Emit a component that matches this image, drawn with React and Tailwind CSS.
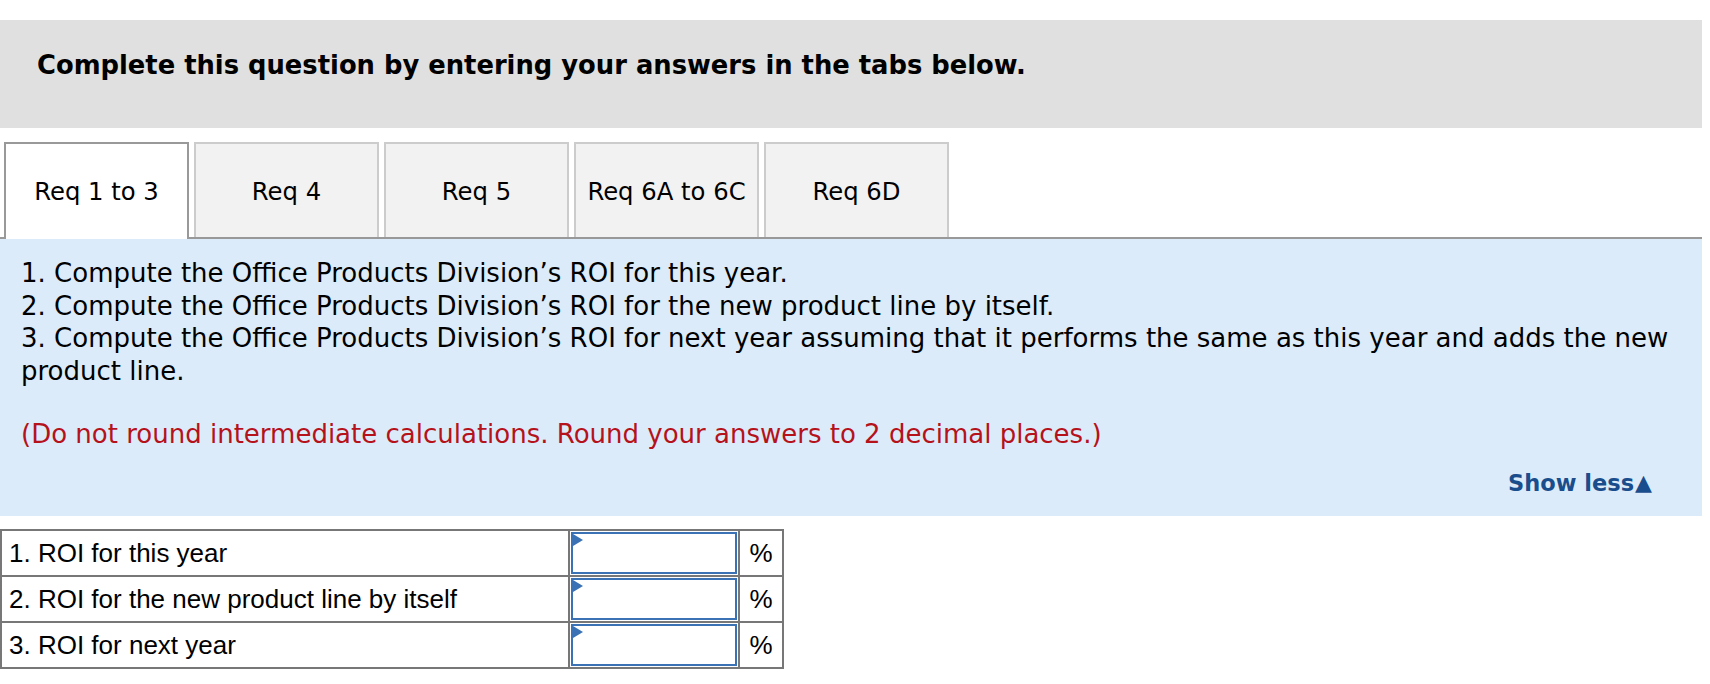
import React from "react";

const tabs = ["Req 1 to 3", "Req 4", "Req 5", "Req 6A to 6C", "Req 6D"];
const rows = [
  "1. ROI for this year",
  "2. ROI for the new product line by itself",
  "3. ROI for next year",
];

export default function App() {
  return (
    <div className="w-[1710px] h-[684px] bg-white pt-[20px] text-black" style={{ fontFamily: '"DejaVu Sans", Verdana, sans-serif' }}>
      <div className="w-[1702px]">
        <div className="h-[108px] bg-[#e0e0e0] pt-[30px] pl-[37px]">
          <h1 className="text-[25.8px] font-bold leading-[30px] whitespace-nowrap">Complete this question by entering your answers in the tabs below.</h1>
        </div>
        <div className="flex items-end gap-[5px] pl-[4px] mt-[14px]">
          {tabs.map((t, i) =>
            i === 0 ? (
              <div key={t} className="relative z-10 w-[185px] h-[97px] -mb-[2px] bg-white border-2 border-b-0 border-[#999999] flex items-center justify-center text-[24.3px]">
                <span className="pt-[1px]">{t}</span>
              </div>
            ) : (
              <div key={t} className="w-[185px] h-[95px] bg-[#f2f2f2] border-2 border-b-0 border-[#cccccc] flex items-center justify-center text-[24.3px]">
                <span className="pt-[3px]">{t}</span>
              </div>
            )
          )}
        </div>
        <div className="border-t-2 border-[#999999] bg-[#dcebf9] h-[279px] pt-[18px] pl-[21px] pr-[20px]">
          <div className="text-[26px] leading-[32.7px] whitespace-nowrap">
            <div>1. Compute the Office Products Division’s ROI for this year.</div>
            <div>2. Compute the Office Products Division’s ROI for the new product line by itself.</div>
            <div>3. Compute the Office Products Division’s ROI for next year assuming that it performs the same as this year and adds the new</div>
            <div>product line.</div>
            <div className="mt-[30px] text-[#b5121b]">(Do not round intermediate calculations. Round your answers to 2 decimal places.)</div>
          </div>
          <div className="flex justify-end pr-[30px] mt-[21px]">
            <span className="text-[#1a4d8c] font-bold text-[22.5px] leading-none flex items-center">
              Show less<span className="text-[22px] ml-[1px]">▲</span>
            </span>
          </div>
        </div>
        <div className="mt-[13px]">
          <table className="border-collapse border-2 border-[#777777]" style={{ fontFamily: '"Liberation Sans", Arial, sans-serif' }}>
            <tbody>
              {rows.map((r) => (
                <tr key={r} className="h-[46px]">
                  <td className="w-[568px] border-2 border-[#777777] pl-[7px] text-[26px] leading-none align-middle whitespace-nowrap">{r}</td>
                  <td className="w-[170px] border-2 border-[#777777] p-0 align-middle">
                    <div className="relative h-[42px] mx-[1px] border-2 border-[#3a72b5] bg-white">
                      <svg className="absolute left-0 top-0" width="10" height="12" viewBox="0 0 10 12">
                        <polygon points="0,0 10,6 0,12" fill="#3a72b5" />
                      </svg>
                    </div>
                  </td>
                  <td className="w-[44px] border-2 border-[#777777] text-center text-[26px] leading-none align-middle">%</td>
                </tr>
              ))}
            </tbody>
          </table>
        </div>
      </div>
    </div>
  );
}
